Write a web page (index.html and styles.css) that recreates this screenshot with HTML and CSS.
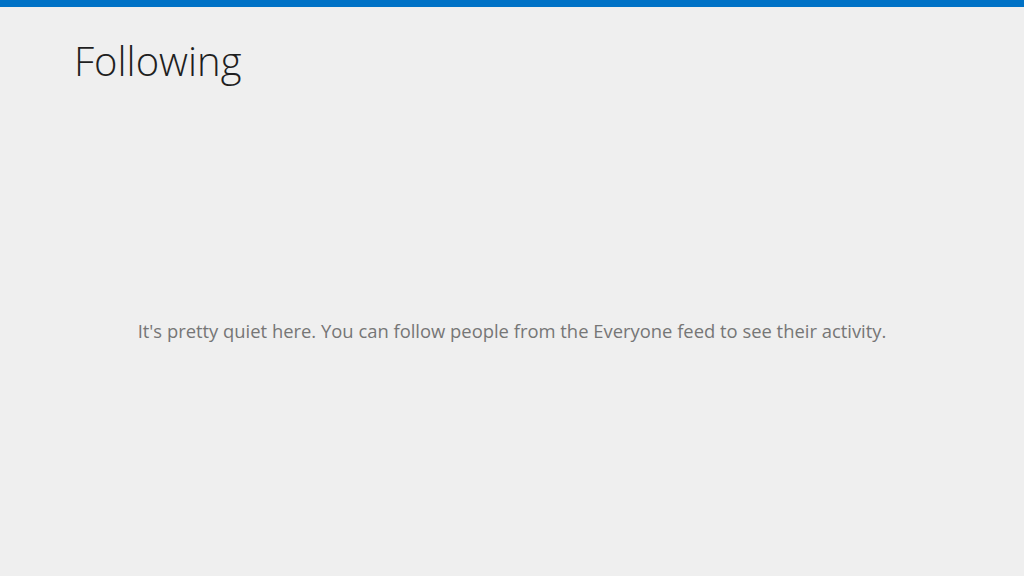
FILE: index.html
```html
<!DOCTYPE html>
<html lang="en">
<head>
    <meta charset="UTF-8">
    <meta name="viewport" content="width=device-width, initial-scale=1.0">
    <title>Following</title>
    <link rel="stylesheet" href="styles.css">
</head>
<body>
    <div class="top-bar"></div>
    <div class="page">
        <h1 class="title">Following</h1>
        <div class="empty">
            <p class="empty-text">It's pretty quiet here. You can follow people from the Everyone feed to see their activity.</p>
        </div>
    </div>
</body>
</html>
```

FILE: styles.css
```css
/* General styles */
body {
    margin: 0;
    height: 100vh;
    display: flex;
    flex-direction: column;
    background-color: #efefef;
    font-family: "Open Sans", "Noto Sans", sans-serif;
    overflow: hidden;
}

.top-bar {
    height: 7px;
    background-color: #0072c6;
    flex-shrink: 0;
}

.page {
    flex: 1;
    display: flex;
    flex-direction: column;
    padding: 0 74px;
}

/* Header */
.title {
    margin: 28px 0 0;
    font-size: 40px;
    font-weight: 300;
    line-height: 52px;
    color: #1f1f1f;
}

/* Empty state */
.empty {
    display: flex;
    justify-content: center;
    padding-top: 232px;
}

.empty-text {
    margin: 0;
    font-size: 18.4px;
    line-height: 24px;
    color: #767676;
}
```
